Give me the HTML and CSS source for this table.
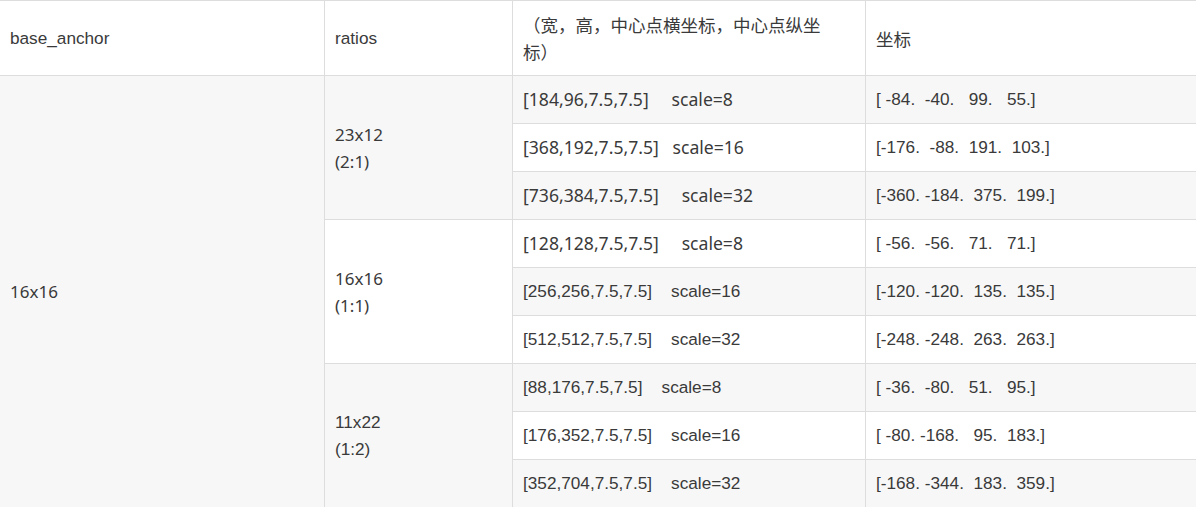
FILE: index.html
```html
<!DOCTYPE html>
<html lang="zh">
<head>
<meta charset="utf-8">
<title>anchors</title>
<link rel="stylesheet" href="styles.css">
</head>
<body>
<table class="grid">
  <colgroup>
    <col class="c1"><col class="c2"><col class="c3"><col class="c4">
  </colgroup>
  <thead>
    <tr>
      <th>base_anchor</th>
      <th>ratios</th>
      <th class="cjk">（宽，高，中心点横坐标，中心点纵坐<br>标）</th>
      <th class="cjk">坐标</th>
    </tr>
  </thead>
  <tbody>
    <tr>
      <td rowspan="9" class="yh">16x16</td>
      <td rowspan="3" class="yh">23x12<br>(2:1)</td>
      <td class="yh big">[184,96,7.5,7.5]&nbsp;&nbsp;&nbsp;&nbsp;&nbsp;scale=8</td>
      <td class="arr">[ -84.  -40.   99.   55.]</td>
    </tr>
    <tr>
      <td class="yh big">[368,192,7.5,7.5]&nbsp;&nbsp;&nbsp;scale=16</td>
      <td class="arr">[-176.  -88.  191.  103.]</td>
    </tr>
    <tr>
      <td class="yh big">[736,384,7.5,7.5]&nbsp;&nbsp;&nbsp;&nbsp;&nbsp;scale=32</td>
      <td class="arr">[-360. -184.  375.  199.]</td>
    </tr>
    <tr>
      <td rowspan="3" class="yh">16x16<br>(1:1)</td>
      <td class="yh big">[128,128,7.5,7.5]&nbsp;&nbsp;&nbsp;&nbsp;&nbsp;scale=8</td>
      <td class="arr">[ -56.  -56.   71.   71.]</td>
    </tr>
    <tr>
      <td>[256,256,7.5,7.5]&nbsp;&nbsp;&nbsp;&nbsp;scale=16</td>
      <td class="arr">[-120. -120.  135.  135.]</td>
    </tr>
    <tr>
      <td>[512,512,7.5,7.5]&nbsp;&nbsp;&nbsp;&nbsp;scale=32</td>
      <td class="arr">[-248. -248.  263.  263.]</td>
    </tr>
    <tr>
      <td rowspan="3">11x22<br>(1:2)</td>
      <td>[88,176,7.5,7.5]&nbsp;&nbsp;&nbsp;&nbsp;scale=8</td>
      <td class="arr">[ -36.  -80.   51.   95.]</td>
    </tr>
    <tr>
      <td>[176,352,7.5,7.5]&nbsp;&nbsp;&nbsp;&nbsp;scale=16</td>
      <td class="arr">[ -80. -168.   95.  183.]</td>
    </tr>
    <tr>
      <td>[352,704,7.5,7.5]&nbsp;&nbsp;&nbsp;&nbsp;scale=32</td>
      <td class="arr">[-168. -344.  183.  359.]</td>
    </tr>
  </tbody>
</table>
</body>
</html>
```
FILE: styles.css
```css
html, body {
  margin: 0;
  padding: 0;
  background: #ffffff;
  overflow: hidden;
}

.grid {
  border-collapse: collapse;
  table-layout: fixed;
  width: 1206px;
  margin-left: -1px;
  font-family: "Liberation Sans", "Noto Sans CJK SC", sans-serif;
  font-size: 17.2px;
  line-height: 27px;
  color: #3a3a3a;
}

.c1 { width: 325px; }
.c2 { width: 188px; }
.c3 { width: 353px; }
.c4 { width: 340px; }

.grid th,
.grid td {
  border: 1px solid #dddddd;
  padding: 10px 10px;
  text-align: left;
  vertical-align: middle;
  font-weight: normal;
}

.grid th {
  background: #ffffff;
}

.grid tbody tr:nth-child(odd) {
  background: #f7f7f7;
}

.grid tbody tr:nth-child(even) {
  background: #ffffff;
}

.grid .cjk {
  font-family: "Noto Sans CJK SC", sans-serif;
  font-size: 17.5px;
}

.grid .yh {
  font-family: "Noto Sans", "Noto Sans CJK SC", sans-serif;
  font-size: 17px;
}

.grid .big {
  font-size: 17.6px;
}

.arr {
  white-space: pre;
}
```
